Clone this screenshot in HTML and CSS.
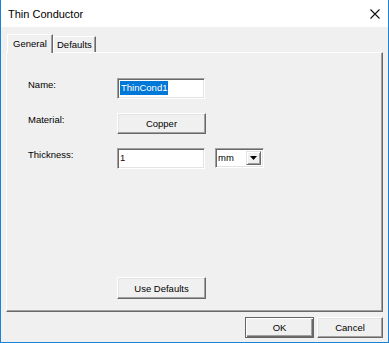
FILE: index.html
```html
<!DOCTYPE html>
<html>
  <head>
    <title>Thin Conductor</title>
    <meta charset="utf-8">
    <link rel="stylesheet" href="styles.css">
  </head>

  <body>
    <div class="window">

      <div class="titlebar">
        <span class="title">Thin Conductor</span>
        <svg class="close" width="10" height="10" viewBox="0 0 10 10">
          <path d="M0.5 0.5 L9.5 9.5 M9.5 0.5 L0.5 9.5" stroke="#111" stroke-width="1.1" fill="none"/>
        </svg>
      </div>

      <div class="tabs">
        <div class="tab selected">General</div>
        <div class="tab">Defaults</div>
      </div>

      <div class="panel">
        <div class="form">
          <label class="label" for="name">Name:</label>
          <div class="field name"><span class="selection">ThinCond1</span></div>

          <label class="label">Material:</label>
          <div class="button material">Copper</div>

          <label class="label" for="thickness">Thickness:</label>
          <div class="thickness-row">
            <div class="field thickness">1</div>
            <div class="select">
              <span class="select-value">mm</span>
              <span class="select-arrow">
                <svg width="7" height="4" viewBox="0 0 7 4"><path d="M0 0 H7 L3.5 4 Z" fill="#000"/></svg>
              </span>
            </div>
          </div>
        </div>

        <div class="defaults-row">
          <div class="button use-defaults">Use Defaults</div>
        </div>
      </div>

      <div class="footer">
        <div class="button ok">OK</div>
        <div class="button cancel">Cancel</div>
      </div>

    </div>
  </body>
</html>
```

FILE: styles.css
```css
html, body {
  margin: 0;
  padding: 0;
  background: #f0f0f0;
}

* {
  box-sizing: border-box;
  font-family: "Liberation Sans", Arial, sans-serif;
  color: #000;
}

.window {
  width: 389px;
  height: 343px;
  border: 1px solid #1883d7;
  border-top: none;
  background: #f0f0f0;
  display: flex;
  flex-direction: column;
}

.titlebar {
  height: 27px;
  background: #fff;
  display: flex;
  align-items: center;
  justify-content: space-between;
  padding: 0 8px 0 7px;
}

.title {
  font-size: 11px;
}

.close {
  display: block;
}

.tabs {
  display: flex;
  align-items: flex-end;
  margin-top: 6px;
  padding-left: 6px;
  height: 19px;
}

.tab {
  font-size: 9.5px;
  height: 16px;
  padding: 2px 3px 0 3px;
  border-top: 1px solid #fff;
  border-left: 1px solid #fff;
  border-right: 1px solid #696969;
  box-shadow: inset -1px 0 #a0a0a0;
}

.tab.selected {
  position: relative;
  z-index: 1;
  height: 19px;
  width: 46px;
  padding: 3px 4px 0 5px;
  margin-bottom: -1px;
  background: #f0f0f0;
}

.panel {
  margin: 0 5px;
  height: 260px;
  border-top: 1px solid #fff;
  border-left: 1px solid #fff;
  border-right: 1px solid #696969;
  border-bottom: 1px solid #696969;
  box-shadow: inset -1px -1px #a0a0a0;
  display: flex;
  flex-direction: column;
  padding: 25px 0 12px 21px;
}

.form {
  display: grid;
  grid-template-columns: 89px auto;
  grid-auto-rows: 21px;
  row-gap: 14px;
}

.label {
  font-size: 9.5px;
  padding-top: 1px;
}

.field {
  height: 21px;
  background: #fff;
  border: 1px solid;
  border-color: #a0a0a0 #fff #fff #a0a0a0;
  box-shadow: inset 1px 1px #696969, inset -1px -1px #e3e3e3;
  font-size: 9.5px;
  padding: 3px 0 0 2px;
}

.name {
  width: 88px;
}

.selection {
  background: #0078d7;
  color: #fff;
  padding: 1px 1px 2px 1px;
}

.thickness-row {
  display: flex;
  gap: 10px;
}

.thickness {
  width: 88px;
  color: #300;
}

.select {
  width: 49px;
  height: 20px;
  display: flex;
  background: #fff;
  border: 1px solid;
  border-color: #a0a0a0 #fff #fff #a0a0a0;
  box-shadow: inset 1px 1px #696969, inset -1px -1px #e3e3e3;
  padding: 2px 2px 2px 2px;
}

.select-value {
  flex: 1;
  font-size: 9.5px;
  padding-top: 1px;
}

.select-arrow {
  width: 15px;
  display: flex;
  align-items: center;
  justify-content: center;
  background: #f0f0f0;
  border: 1px solid;
  border-color: #e3e3e3 #696969 #696969 #e3e3e3;
  box-shadow: inset 1px 1px #fff, inset -1px -1px #a0a0a0;
}

.select-arrow svg {
  display: block;
}

.button {
  height: 21px;
  display: flex;
  align-items: center;
  justify-content: center;
  font-size: 9.5px;
  background: #f0f0f0;
  border: 1px solid;
  border-color: #fff #696969 #696969 #fff;
  box-shadow: inset -1px -1px #a0a0a0, inset 1px 1px #e3e3e3;
}

.material {
  width: 89px;
}

.defaults-row {
  margin-top: auto;
  padding-left: 89px;
}

.use-defaults {
  width: 89px;
  height: 22px;
}

.footer {
  display: flex;
  justify-content: flex-end;
  gap: 3px;
  padding: 5px 5px 0 0;
}

.ok {
  width: 69px;
  border-color: #646464;
  box-shadow: inset 1px 1px #fff, inset -1px -1px #696969, inset -2px -2px #a0a0a0;
}

.cancel {
  width: 66px;
}
```
